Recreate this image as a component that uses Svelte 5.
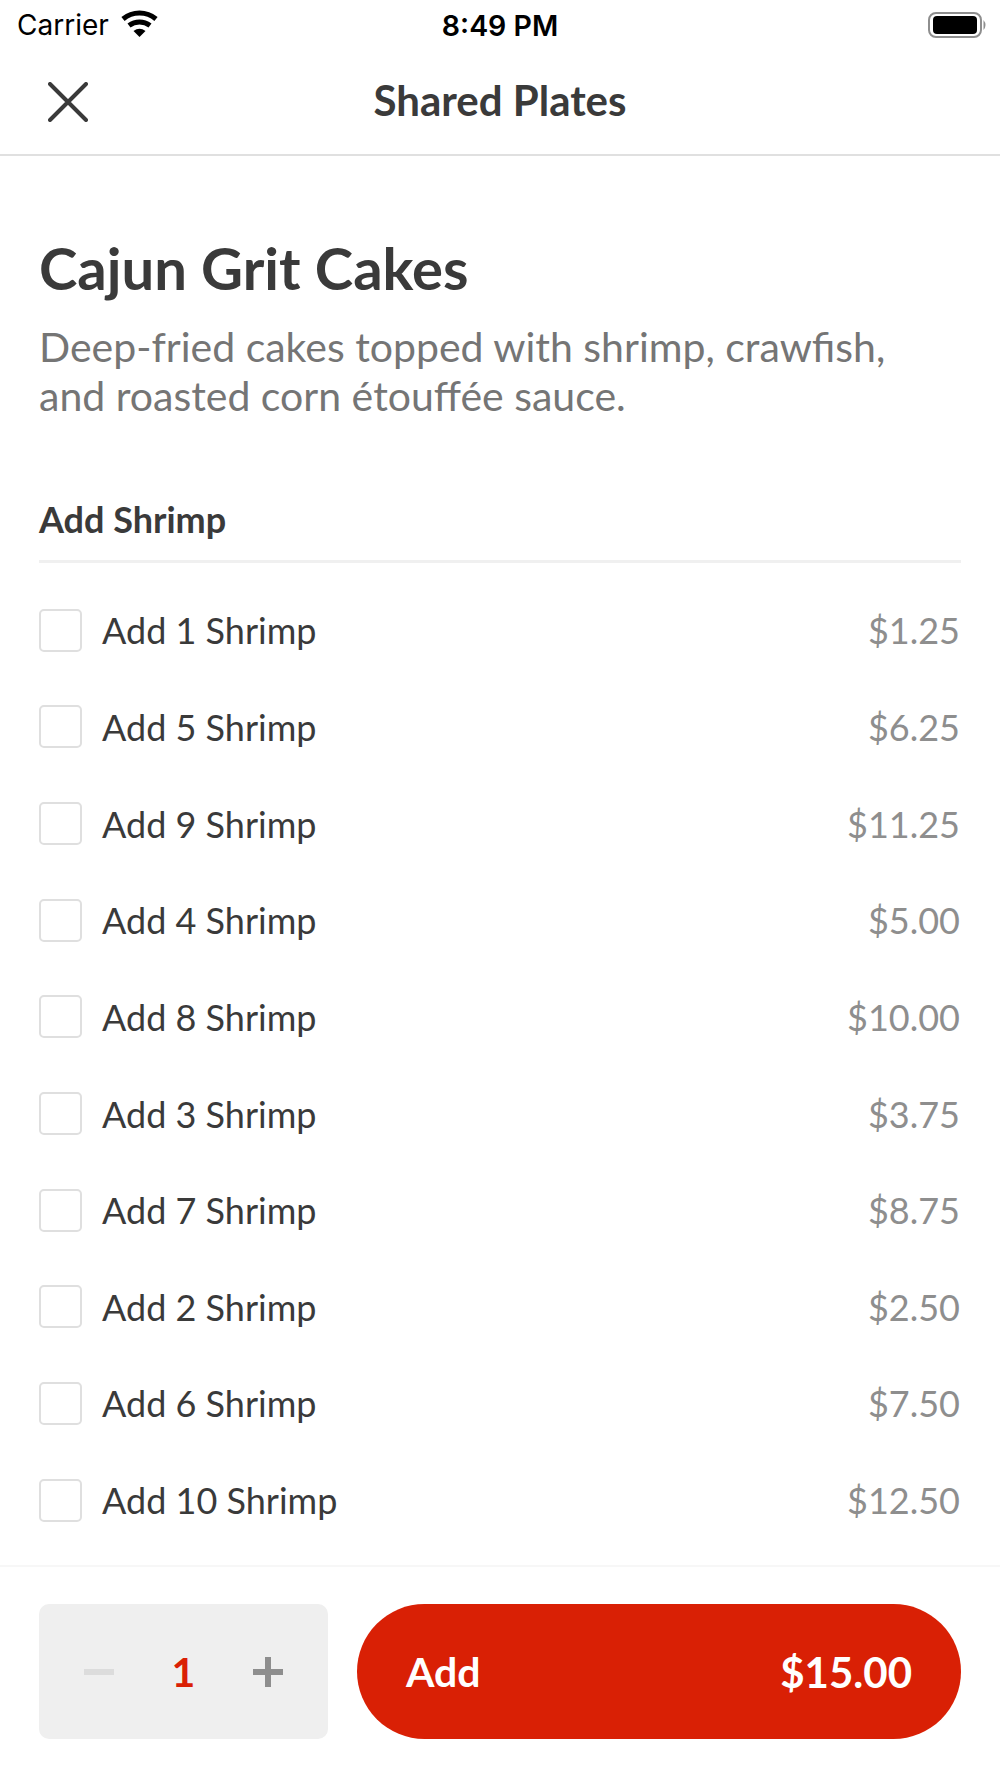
<script>
  const options = [
    { n: 1, price: "$1.25" },
    { n: 5, price: "$6.25" },
    { n: 9, price: "$11.25" },
    { n: 4, price: "$5.00" },
    { n: 8, price: "$10.00" },
    { n: 3, price: "$3.75" },
    { n: 7, price: "$8.75" },
    { n: 2, price: "$2.50" },
    { n: 6, price: "$7.50" },
    { n: 10, price: "$12.50" }
  ];
</script>

<div class="screen">
  <div class="status">
    <div class="carrier">
      <span>Carrier</span>
      <svg class="wifi" viewBox="0 0 37 27" width="37" height="27" aria-hidden="true">
        <path d="M18.5 27 L12.5 21 A10 10 0 0 1 24.5 21 Z" fill="#000"/>
        <path d="M8 15.5 A17.5 17.5 0 0 1 29 15.5" fill="none" stroke="#000" stroke-width="5"/>
        <path d="M2 9 A25.7 25.7 0 0 1 35 9" fill="none" stroke="#000" stroke-width="5"/>
      </svg>
    </div>
    <div class="time">8:49 PM</div>
    <svg class="battery" viewBox="0 0 59 26" width="59" height="26" aria-hidden="true">
      <rect x="1" y="1" width="52" height="24" rx="7" fill="none" stroke="#8e8e8e" stroke-width="2"/>
      <rect x="5" y="4" width="44" height="18" rx="4" fill="#000"/>
      <path d="M55.5 8 Q59.5 13 55.5 18 Z" fill="#8e8e8e"/>
    </svg>
  </div>

  <header class="nav">
    <svg class="close" viewBox="0 0 40 40" width="40" height="40" aria-hidden="true">
      <path d="M2 2 L38 38 M38 2 L2 38" stroke="#3a3a3a" stroke-width="4" stroke-linecap="round"/>
    </svg>
    <h2>Shared Plates</h2>
  </header>

  <main class="content">
    <h1>Cajun Grit Cakes</h1>
    <p class="desc">Deep-fried cakes topped with shrimp, crawfish,<br />and roasted corn étouffée sauce.</p>

    <div class="group-title">Add Shrimp</div>
    <ul class="options">
      {#each options as o}
        <li>
          <span class="check"></span>
          <span class="label">Add {o.n} Shrimp</span>
          <span class="price">{o.price}</span>
        </li>
      {/each}
    </ul>
  </main>

  <footer class="bar">
    <div class="stepper">
      <span class="minus"></span>
      <span class="qty">1</span>
      <span class="plus"></span>
    </div>
    <button class="add">
      <span class="add-label">Add</span>
      <span class="add-total">$15.00</span>
    </button>
  </footer>
</div>

<style>
  :global(body) { margin: 0; background: #fff; }

  .screen {
    width: 1000px;
    height: 1778px;
    display: flex;
    flex-direction: column;
    font-family: Lato, "Open Sans", sans-serif;
    color: #3a3a3a;
    background: #fff;
    overflow: hidden;
  }

  /* STATUS BAR */
  .status {
    height: 50px;
    padding: 0 13px 2px 17px;
    display: flex;
    align-items: center;
    justify-content: space-between;
    position: relative;
    font-family: Inter, "Liberation Sans", sans-serif;
    font-size: 28px;
    color: #000;
  }
  .carrier { display: flex; align-items: center; gap: 12px; }
  .wifi { margin-top: -3px; }
  .time {
    position: absolute;
    left: 0; right: 0;
    text-align: center;
    font-weight: 600;
    font-size: 28.5px;
  }

  /* NAV */
  .nav {
    height: 102px;
    border-bottom: 2px solid #e0e0e0;
    display: flex;
    align-items: center;
    justify-content: center;
    position: relative;
  }
  .close { position: absolute; left: 48px; top: 30px; }
  .nav h2 {
    margin: -6px 0 0;
    font-size: 42px;
    font-weight: 700;
    color: #3a3a3a;
  }

  /* CONTENT */
  .content { flex: 1; padding: 0 39px; }
  h1 {
    margin: 0;
    padding-top: 78px;
    font-size: 58px;
    line-height: 68px;
    font-weight: 700;
    color: #3a3a3a;
  }
  .desc {
    margin: 20px 0 0;
    font-size: 41px;
    line-height: 49px;
    color: #757575;
  }
  .group-title {
    margin-top: 77px;
    font-size: 36px;
    line-height: 44px;
    font-weight: 700;
    color: #3a3a3a;
    padding-bottom: 19px;
    border-bottom: 3px solid #f0f0f0;
  }
  .options {
    list-style: none;
    margin: 19px 0 0;
    padding: 0;
  }
  .options li {
    height: 96.65px;
    display: flex;
    align-items: center;
  }
  .check {
    width: 43px;
    height: 43px;
    box-sizing: border-box;
    border: 2px solid #dfdfdf;
    border-radius: 5px;
    margin-right: 20px;
  }
  .label { flex: 1; font-size: 36px; color: #3a3a3a; }
  .price { font-size: 36px; color: #8e8e8e; padding-right: 1px; }

  /* FOOTER */
  .bar {
    height: 213px;
    box-sizing: border-box;
    border-top: 2px solid #f7f7f7;
    padding: 37px 39px 0;
    display: flex;
    gap: 29px;
  }
  .stepper {
    width: 289px;
    height: 135px;
    border-radius: 10px;
    background: #efefef;
    display: flex;
    align-items: center;
    justify-content: space-between;
    padding: 0 45px;
    box-sizing: border-box;
  }
  .minus { width: 30px; height: 6px; background: #dcdcdc; }
  .plus {
    width: 30px;
    height: 30px;
    background:
      linear-gradient(#8e8e8e, #8e8e8e) center / 30px 6px no-repeat,
      linear-gradient(#8e8e8e, #8e8e8e) center / 6px 30px no-repeat;
  }
  .qty { font-size: 41px; font-weight: 700; color: #da2005; }
  .add {
    flex: 1;
    height: 135px;
    border: 0;
    border-radius: 68px;
    background: #d92005;
    color: #fff;
    font: 700 41px Lato, sans-serif;
    padding: 0 49px;
    display: flex;
    align-items: center;
    justify-content: space-between;
  }
  .add-total { font-size: 42px; }
</style>
